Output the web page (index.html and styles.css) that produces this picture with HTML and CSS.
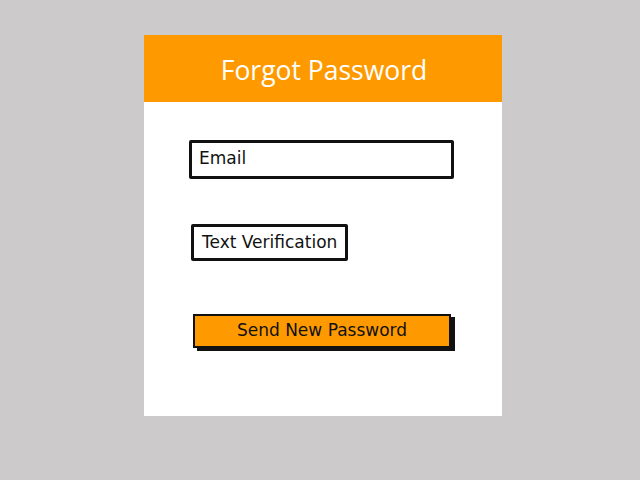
FILE: index.html
```html
<!DOCTYPE html>
<html>
<head>
<meta charset="utf-8">
<link rel="stylesheet" href="styles.css">
</head>
<body>
<div class="card">
  <div class="header">Forgot Password</div>
  <div class="content">
    <div class="field field-email">Email</div>
    <div class="field field-verify">Text Verification</div>
    <div class="btn">Send New Password</div>
  </div>
</div>
</body>
</html>
```
FILE: styles.css
```css
html, body { margin: 0; padding: 0; }
body {
  background: #cccaca;
  width: 640px;
  height: 480px;
  overflow: hidden;
}
.card {
  margin: 35px 0 0 144px;
  width: 358px;
  height: 381px;
  background: #ffffff;
  display: flex;
  flex-direction: column;
}
.header {
  height: 67px;
  background: #fe9a00;
  color: #ffffff;
  font-family: "Open Sans", sans-serif;
  font-size: 26.5px;
  display: flex;
  align-items: center;
  justify-content: center;
  padding-left: 2px;
  padding-top: 2px;
  box-sizing: border-box;
}
.content {
  display: flex;
  flex-direction: column;
  align-items: flex-start;
  padding-top: 38px;
}
.field {
  box-sizing: border-box;
  border: 3px solid #111;
  border-radius: 2px;
  font-family: "DejaVu Sans", sans-serif;
  font-size: 17px;
  color: #111;
  display: flex;
  align-items: center;
}
.field-email {
  margin-left: 45px;
  width: 265px;
  height: 39px;
  padding-left: 7px;
  padding-bottom: 3px;
}
.field-verify {
  margin-left: 47px;
  margin-top: 45px;
  width: 157px;
  height: 37px;
  padding-left: 8px;
  padding-bottom: 2px;
}
.btn {
  box-sizing: border-box;
  margin-left: 49px;
  margin-top: 53px;
  width: 258px;
  height: 34px;
  background: #fe9a00;
  border: 2px solid #111;
  box-shadow: 4px 3px 0 #111;
  font-family: "DejaVu Sans", sans-serif;
  font-size: 17px;
  color: #111;
  display: flex;
  align-items: center;
  justify-content: center;
  padding-bottom: 2px;
}
```
